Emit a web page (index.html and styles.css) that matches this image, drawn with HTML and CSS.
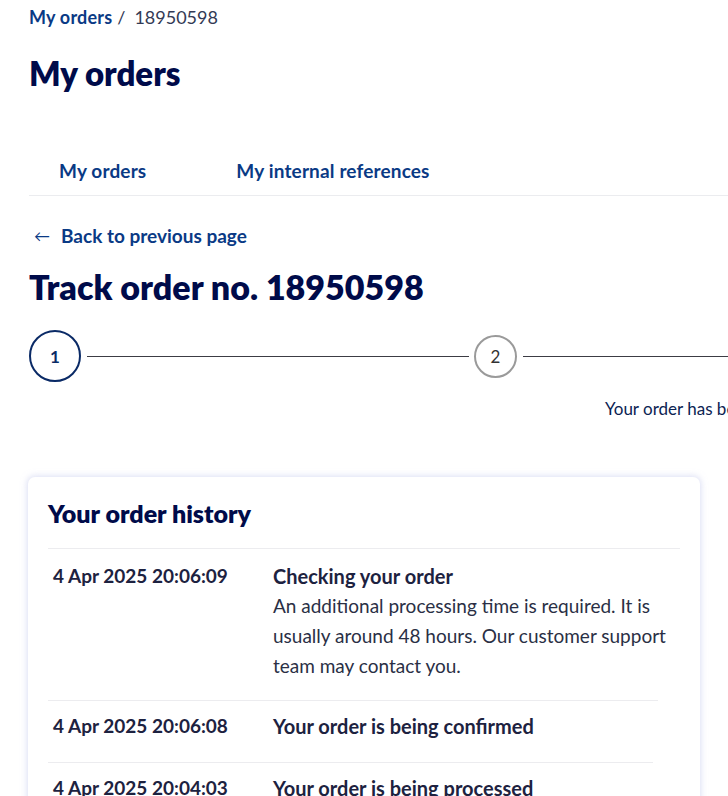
FILE: index.html
```html
<!DOCTYPE html>
<html lang="en">
<head>
<meta charset="utf-8">
<title>Track order</title>
<link rel="stylesheet" href="styles.css">
</head>
<body>
<div class="page">
  <nav class="breadcrumb"><a class="crumb-link" href="#">My orders</a><span class="sep">/</span><span class="crumb-current">18950598</span></nav>
  <h1 class="title">My orders</h1>
  <div class="tabs">
    <a class="tab" href="#">My orders</a>
    <a class="tab" href="#">My internal references</a>
  </div>
  <a class="back" href="#"><span class="back-arrow">&larr;</span>Back to previous page</a>
  <h2 class="track-title">Track order no. 18950598</h2>
  <div class="stepper">
    <div class="step step-active">1</div>
    <div class="step-line"></div>
    <div class="step step-todo">2</div>
    <div class="step-line"></div>
  </div>
  <p class="step-label">Your order has been received</p>
  <section class="card">
    <h3 class="card-title">Your order history</h3>
    <div class="row row-1">
      <div class="row-date">4 Apr 2025 20:06:09</div>
      <div class="row-body">
        <div class="row-title">Checking your order</div>
        <div class="row-text">An additional processing time is required. It is usually around 48 hours. Our customer support team may contact you.</div>
      </div>
    </div>
    <div class="row row-2">
      <div class="row-date">4 Apr 2025 20:06:08</div>
      <div class="row-body">
        <div class="row-title">Your order is being confirmed</div>
      </div>
    </div>
    <div class="row row-3">
      <div class="row-date">4 Apr 2025 20:04:03</div>
      <div class="row-body">
        <div class="row-title">Your order is being processed</div>
      </div>
    </div>
  </section>
</div>
</body>
</html>
```
FILE: styles.css
```css
html, body {
  margin: 0;
  padding: 0;
  background: #ffffff;
  overflow: hidden;
}
body {
  font-family: Lato, "Liberation Sans", sans-serif;
  color: #1d2240;
}
a { text-decoration: none; }
.page {
  padding: 0 0 0 29px;
  width: 900px;
}
.breadcrumb {
  height: 34px;
  display: flex;
  align-items: center;
  font-size: 18px;
}
.crumb-link {
  color: #0a3a85;
  font-weight: 700;
  letter-spacing: 0.2px;
}
.sep {
  color: #333a55;
  margin: 0 9px 0 5px;
}
.crumb-current { color: #333a55; }
.title {
  margin: 19px 0 0;
  font-size: 33px;
  line-height: 40px;
  font-weight: 800;
  color: #000b4a;
}
.tabs {
  margin-top: 58px;
  width: 699px;
  box-sizing: border-box;
  border-bottom: 1px solid #ebecef;
  display: flex;
  height: 45px;
  padding-bottom: 6px;
  align-items: center;
}
.tab {
  font-size: 19px;
  font-weight: 700;
  color: #0a3a85;
  letter-spacing: 0.15px;
  margin-left: 30px;
  margin-right: 90px;
}
.tab + .tab { margin-left: 0; }
.back {
  display: flex;
  align-items: center;
  margin-top: 26px;
  height: 26px;
  font-size: 19px;
  font-weight: 700;
  color: #0a3a85;
}
.back-arrow {
  font-weight: 400;
  font-size: 16px;
  margin: 0 11px 0 5px;
}
.track-title {
  margin: 19px 0 0;
  font-size: 34px;
  line-height: 40px;
  font-weight: 800;
  color: #000b4a;
}
.stepper {
  margin-top: 23px;
  display: flex;
  align-items: center;
  height: 52px;
}
.step {
  box-sizing: border-box;
  border-radius: 50%;
  display: flex;
  align-items: center;
  justify-content: center;
  font-size: 17px;
  flex: none;
}
.step-active {
  width: 52px;
  height: 52px;
  border: 2px solid #0a2a66;
  color: #0a2a66;
  font-weight: 700;
}
.step-todo {
  width: 43px;
  height: 43px;
  border: 2px solid #9a9a9a;
  color: #333;
}
.step-line {
  height: 1px;
  background: #3c3c44;
  width: 382px;
  margin: 0 5px 0 6px;
  flex: none;
}
.step-label {
  margin: 16px 0 0 576px;
  font-size: 17px;
  color: #0b2352;
  white-space: nowrap;
}
.card {
  margin-top: 58px;
  width: 632px;
  box-sizing: content-box;
  padding: 18px 20px 40px 20px;
  border-radius: 7px;
  box-shadow: 0 0 6px 1px rgba(190, 195, 235, 0.55);
  margin-left: -1px;
}
.card-title {
  margin: 0;
  font-size: 25px;
  line-height: 36px;
  font-weight: 800;
  color: #000b4a;
  padding-bottom: 17px;
}
.row {
  box-sizing: border-box;
  border-top: 1px solid #ececef;
  display: flex;
  padding: 12px 0 19px 5px;
  font-size: 19px;
  line-height: 30px;
}
.row-2 { width: 610px; padding-top: 10px; padding-bottom: 21px; }
.row-3 { width: 605px; padding-top: 10px; }
.row-date {
  width: 220px;
  flex: none;
  font-weight: 700;
  color: #1d2240;
}
.row-body { flex: 1; }
.row-title {
  font-weight: 700;
  color: #1d2240;
  font-size: 20px;
}
.row-text {
  color: #2a2f45;
}
```
